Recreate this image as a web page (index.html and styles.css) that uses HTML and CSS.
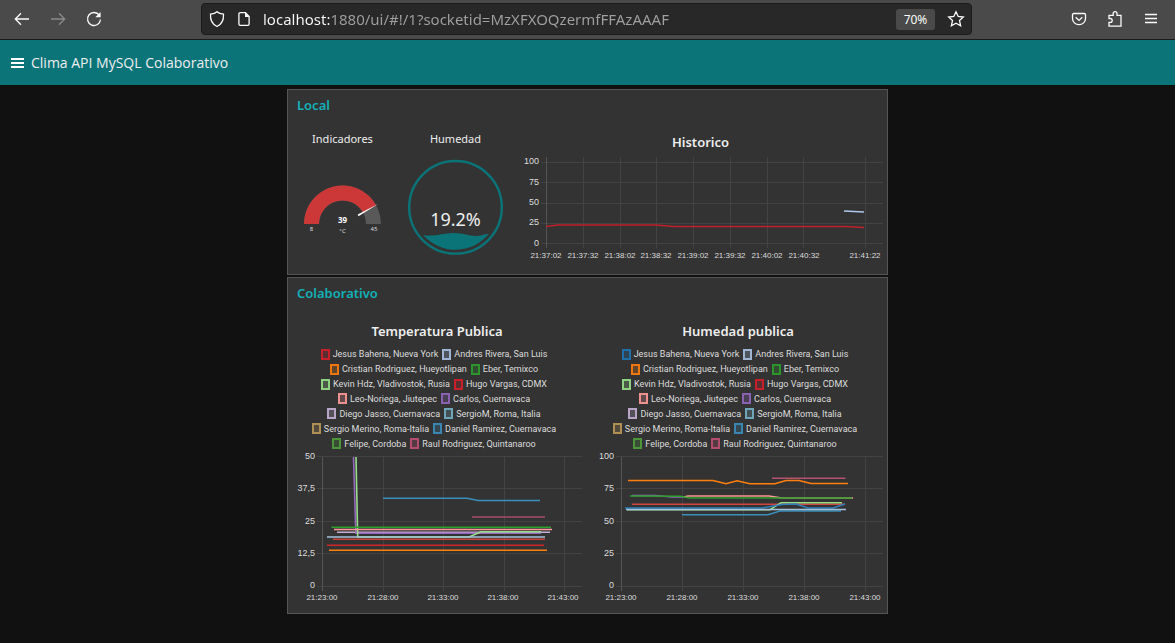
FILE: index.html
```html
<!DOCTYPE html>
<html lang="es">
<head>
<meta charset="utf-8">
<meta name="viewport" content="width=device-width, initial-scale=1">
<title>Clima API MySQL Colaborativo</title>
<link rel="stylesheet" href="styles.css">
</head>
<body>
<div class="browser">
  <div class="browser-group">
    <button class="tool" aria-label="Atrás"><svg width="16" height="16" viewBox="0 0 16 16"><path d="M15 8H1.500M7 2.200L1.300 8L7 13.800"/></svg></button>
    <button class="tool tool-off" aria-label="Adelante" disabled><svg width="16" height="16" viewBox="0 0 16 16"><path d="M1 8h13.500M9 2.200L14.700 8L9 13.800"/></svg></button>
    <button class="tool" aria-label="Recargar"><svg width="16" height="16" viewBox="0 0 16 16"><path d="M13.300 4.200A6.500 6.500 0 1 0 14.500 8.500"/><path class="solid" d="M14.600 1v5.200H9.300z"/></svg></button>
  </div>
  <div class="address">
    <svg width="16" height="18" viewBox="0 0 16 18"><path d="M8 1.700C6.300 3.400 3.600 4 1.500 4.200c-.3 5.500 1.200 9.800 6.500 12.300 5.300-2.500 6.800-6.800 6.500-12.300C12.400 4 9.700 3.400 8 1.700z"/></svg>
    <svg width="14" height="16" viewBox="0 0 14 16"><path d="M8.500 1.700H3.200a1.300 1.300 0 0 0-1.300 1.300v10a1.300 1.300 0 0 0 1.300 1.300h7.600a1.300 1.300 0 0 0 1.300-1.300V5.500z"/><path class="solid" d="M8 1.500v4.500h4.500z"/></svg>
    <input class="url" type="text" aria-label="Dirección" value="localhost:1880/ui/#!/1?socketid=MzXFXOQzermfFFAzAAAF">
    <button class="zoom">70%</button>
    <button class="star" aria-label="Marcador"><svg width="18" height="18" viewBox="0 0 18 18"><path d="M9 1.800l2.200 4.700 5.100.600-3.800 3.400 1.100 5.200L9 13.200l-4.600 2.500 1.100-5.200L1.700 7.100l5.100-.6z"/></svg></button>
  </div>
  <div class="browser-group">
    <button class="tool" aria-label="Pocket"><svg width="16" height="16" viewBox="0 0 16 16"><path d="M2.800 2.500h10.400c.8 0 1.300.5 1.300 1.300V7.500a6.500 6.200 0 0 1-13 0V3.800c0-.8.5-1.300 1.300-1.300z"/><path d="M4.700 6.200L8 9.400l3.300-3.200"/></svg></button>
    <button class="tool" aria-label="Extensiones"><svg width="16" height="18" viewBox="0 0 16 18"><path d="M2 16.200V12.300h1.300a1.900 1.900 0 0 0 0-3.800H2V5.300h4.200V3.500a1.900 1.900 0 0 1 3.800 0v1.800h4v10.900z"/></svg></button>
    <button class="tool" aria-label="Menú"><svg width="14" height="14" viewBox="0 0 14 14"><path d="M1 2.500h12M1 6.500h12M1 10.500h12"/></svg></button>
  </div>
</div>

<header class="appbar">
  <button class="burger" aria-label="Abrir menú"><svg width="14" height="10" viewBox="0 0 14 10"><path d="M0 1h13M0 5h13M0 9h13"/></svg></button>
  <h1>Clima API MySQL Colaborativo</h1>
</header>

<main class="board">
  <section class="panel">
    <h2>Local</h2>
    <div class="local">
      <div class="cell">
        <h3 class="small-title">Indicadores</h3>
        <svg class="plot" viewBox="288 147 109 127" role="img" aria-label="39 °C">
          <path fill="#595959" d="M304 224A38.500 38.500 0 0 1 381 224H366A23.500 23.500 0 0 0 319 224z"/>
          <path fill="#cb3837" d="M304 224A38.500 38.500 0 0 1 376.100 205.200L363 212.500A23.500 23.500 0 0 0 319 224z"/>
          <path fill="#fff" d="M357.700 214.600L378.500 203.800L358.500 216.200z"/>
          <g class="gauge-text"><text class="gauge-value" x="342.500" y="223">39</text><text x="311.500" y="231">8</text><text x="374" y="231">45</text><text x="342.500" y="233">°C</text></g>
        </svg>
      </div>
      <div class="cell">
        <h3 class="small-title">Humedad</h3>
        <svg class="plot" viewBox="397 147 117 127" role="img" aria-label="19.2%">
          <circle cx="455.500" cy="207.300" r="46.300" fill="none" stroke="#0a7479" stroke-width="2.400"/>
          <path fill="#0a7479" d="M423 235C435 237 443 233 453 233C464 233 469 236 475 236C481 236 484 234 489 233.700A43 43 0 0 1 423 235z"/>
          <text class="level" x="455.500" y="226">19.2%</text>
        </svg>
      </div>
      <div class="cell">
        <h3 class="chart-title chart-title-local">Historico</h3>
        <svg class="plot" viewBox="514 150 373 124" role="img" aria-label="Historico">
          <path class="grid" d="M541 162.500H883M541 182.500H883M541 203.500H883M541 223.500H883M541 243.500H883M583.500 157V248M620.500 157V248M656.500 157V248M693.500 157V248M730.500 157V248M767.500 157V248M803.500 157V248M865.500 157V248"/>
          <path class="grid axis" d="M546.500 157V248"/>
          <g class="ylab"><text x="539" y="164">100</text><text x="539" y="185">75</text><text x="539" y="205">50</text><text x="539" y="225">25</text><text x="539" y="246">0</text></g>
          <g class="xlab"><text x="546" y="258">21:37:02</text><text x="583" y="258">21:37:32</text><text x="620" y="258">21:38:02</text><text x="656" y="258">21:38:32</text><text x="693" y="258">21:39:02</text><text x="730" y="258">21:39:32</text><text x="767" y="258">21:40:02</text><text x="804" y="258">21:40:32</text><text x="865" y="258">21:41:22</text></g>
          <g class="lines"><polyline stroke="#c01f2b" points="546,226.500 558,225 656,225 674,226.500 845,226.500 864,227.500"/><polyline stroke="#aec7e8" points="844,211 864,212"/></g>
        </svg>
      </div>
    </div>
  </section>

  <section class="panel">
    <h2>Colaborativo</h2>
    <div class="shared">
      <div class="cell">
        <h3 class="chart-title">Temperatura Publica</h3>
        <ul class="legend">
          <li><span class="key c-red">Jesus Bahena, Nueva York</span><span class="key c-ice">Andres Rivera, San Luis</span></li>
          <li><span class="key c-orange">Cristian Rodriguez, Hueyotlipan</span><span class="key c-green">Eber, Temixco</span></li>
          <li><span class="key c-lime">Kevin Hdz, Vladivostok, Rusia</span><span class="key c-red">Hugo Vargas, CDMX</span></li>
          <li><span class="key c-pink">Leo-Noriega, Jiutepec</span><span class="key c-purple">Carlos, Cuernavaca</span></li>
          <li><span class="key c-lilac">Diego Jasso, Cuernavaca</span><span class="key c-cyan">SergioM, Roma, Italia</span></li>
          <li><span class="key c-sand">Sergio Merino, Roma-Italia</span><span class="key c-steel">Daniel Ramirez, Cuernavaca</span></li>
          <li><span class="key c-leaf">Felipe, Cordoba</span><span class="key c-rose">Raul Rodriguez, Quintanaroo</span></li>
        </ul>
        <svg class="plot" viewBox="288 451 298 162" role="img" aria-label="Temperatura Publica">
          <path class="grid" d="M317 456.500H582M317 488.500H582M317 521.500H582M317 553.500H582M317 586.500H582M383.500 457V591M443.500 457V591M504.500 457V591M564.500 457V591"/>
          <path class="grid axis" d="M322.500 457V591"/>
          <g class="ylab"><text x="315" y="459">50</text><text x="315" y="491">37,5</text><text x="315" y="524">25</text><text x="315" y="556">12,5</text><text x="315" y="588">0</text></g>
          <g class="xlab"><text x="322" y="600">21:23:00</text><text x="383" y="600">21:28:00</text><text x="443" y="600">21:33:00</text><text x="503" y="600">21:38:00</text><text x="563" y="600">21:43:00</text></g>
          <g class="lines">
            <polyline stroke="#3a8fbb" points="383,498.300 467,498.300 478,500.500 540,500.500"/>
            <polyline stroke="#a84c69" points="472,517 545,517"/>
            <polyline stroke="#c8453c" points="333,539.300 545,539.300"/>
            <polyline stroke="#c5b0d5" points="337,532.300 550,532.300"/>
            <polyline stroke="#9467bd" points="353.500,457 355.800,533.300 541,533.300"/>
            <polyline stroke="#98df8a" points="356,457 357.700,537 469,537 481,531.700 541,531.700"/>
            <polyline stroke="#a5c4dc" points="327,537 545,537"/>
            <polyline stroke="#ff9896" points="334,529.500 552,529.500"/>
            <polyline stroke="#2ca02c" points="331.500,527.300 551,527.300"/>
            <polyline stroke="#d62728" points="327,545.200 544,545.200"/>
            <polyline stroke="#ff7f0e" points="329,550.300 547,550.300"/>
          </g>
        </svg>
      </div>
      <div class="cell">
        <h3 class="chart-title">Humedad publica</h3>
        <ul class="legend">
          <li><span class="key c-blue">Jesus Bahena, Nueva York</span><span class="key c-ice">Andres Rivera, San Luis</span></li>
          <li><span class="key c-orange">Cristian Rodriguez, Hueyotlipan</span><span class="key c-green">Eber, Temixco</span></li>
          <li><span class="key c-lime">Kevin Hdz, Vladivostok, Rusia</span><span class="key c-red">Hugo Vargas, CDMX</span></li>
          <li><span class="key c-pink">Leo-Noriega, Jiutepec</span><span class="key c-purple">Carlos, Cuernavaca</span></li>
          <li><span class="key c-lilac">Diego Jasso, Cuernavaca</span><span class="key c-cyan">SergioM, Roma, Italia</span></li>
          <li><span class="key c-sand">Sergio Merino, Roma-Italia</span><span class="key c-steel">Daniel Ramirez, Cuernavaca</span></li>
          <li><span class="key c-leaf">Felipe, Cordoba</span><span class="key c-rose">Raul Rodriguez, Quintanaroo</span></li>
        </ul>
        <svg class="plot" viewBox="589 451 298 162" role="img" aria-label="Humedad publica">
          <path class="grid" d="M616 456.500H883M616 488.500H883M616 521.500H883M616 553.500H883M616 586.500H883M682.500 457V591M743.500 457V591M804.500 457V591M865.500 457V591"/>
          <path class="grid axis" d="M621.500 457V591"/>
          <g class="ylab"><text x="614" y="459">100</text><text x="614" y="491">75</text><text x="614" y="524">50</text><text x="614" y="556">25</text><text x="614" y="588">0</text></g>
          <g class="xlab"><text x="621" y="600">21:23:00</text><text x="682" y="600">21:28:00</text><text x="743" y="600">21:33:00</text><text x="804" y="600">21:38:00</text><text x="865" y="600">21:43:00</text></g>
          <g class="lines">
            <polyline stroke="#b5526f" points="772,478.300 845.500,478.300"/>
            <polyline stroke="#9467bd" points="632,495.500 655,495.500 672,497 684,497"/>
            <polyline stroke="#ff9896" points="684,497 688,496 769,496 782,498 853,498"/>
            <polyline stroke="#d0453f" points="632,504.200 845,504.200"/>
            <polyline stroke="#3a8fbb" points="682,514.700 768,514.700 780,511 841,511"/>
            <polyline stroke="#98df8a" points="627,509.700 770,509.700 781,502.700 842,502.700"/>
            <polyline stroke="#2f7fbb" points="625,508 762,508 782,504.500 796,504 808,508 833,508 845,504"/>
            <polyline stroke="#a5c4dc" points="626,509.500 846,509.500"/>
            <polyline stroke="#2ca02c" points="630,496 680,496.300 690,498 852,498"/>
            <polyline stroke="#ff7f0e" points="628,480.500 713,480.500 726,483.700 737,480.700 750,483.700 775,483.700 786,480.500 799,480.500 811,483.500 848,483.500"/>
          </g>
        </svg>
      </div>
    </div>
  </section>
</main>
</body>
</html>
```

FILE: styles.css
```css
* { box-sizing: border-box; }

body {
  margin: 0;
  min-height: 100vh;
  background: #111;
  color: #eee;
  font-family: "Noto Sans", "Open Sans", sans-serif;
}

h1, h2, h3, ul { margin: 0; padding: 0; }

button {
  display: flex;
  align-items: center;
  justify-content: center;
  padding: 0;
  border: 0;
  background: none;
  color: inherit;
  font: inherit;
}

/* Browser toolbar */
.browser {
  display: flex;
  align-items: center;
  height: 40px;
  padding: 0 6px 1px 4px;
  background: #4a4a4a;
  border-bottom: 1px solid #1c1c1c;
  color: #fbfbfb;
}
.browser svg { fill: none; stroke: currentColor; stroke-width: 1.3; flex: none; }
.browser .solid { fill: currentColor; stroke: none; }
.browser-group { display: flex; }
.tool { width: 36px; height: 32px; }
.tool-off { color: #8a8a8a; }
.address {
  display: flex;
  align-items: center;
  flex: 1;
  min-width: 0;
  height: 32px;
  margin: 0 89px;
  padding: 0 6px 0 7px;
  gap: 12px;
  background: #282828;
  border: 1px solid #1b1b1b;
  border-radius: 4px;
}
.url {
  flex: 1;
  min-width: 0;
  padding: 0;
  border: 0;
  outline: 0;
  font: 15px "Noto Sans", "Open Sans", sans-serif;
  color: transparent;
  background: linear-gradient(90deg, #fbfbfb 67px, #a0a0a0 67px);
  background-clip: text;
  -webkit-background-clip: text;
}
.zoom {
  width: 39px;
  height: 21px;
  background: #4a4a4a;
  border-radius: 3px;
  font-size: 12px;
}
.star { width: 18px; height: 21px; }

/* Dashboard header */
.appbar {
  display: flex;
  align-items: center;
  gap: 6px;
  height: 45px;
  padding: 0 11px;
  background: #0a7479;
  color: #fff;
}
.appbar h1 {
  font: 400 14px/20px "Open Sans", "Noto Sans", sans-serif;
  color: #eee;
}
.burger svg { fill: none; stroke: #fff; stroke-width: 2; }

/* Panels */
.board {
  display: grid;
  gap: 2px;
  max-width: 601px;
  margin: 4px auto;
}
.panel { background: #333; border: 1px solid #555; }
.panel h2 {
  padding-left: 9px;
  font-size: 13px;
  line-height: 30px;
  font-weight: 600;
  color: #14b1b8;
}
.local { display: grid; grid-template-columns: 109fr 117fr 373fr; }
.shared { display: grid; grid-template-columns: 1fr 1fr; gap: 3px; }
.cell { min-width: 0; text-align: center; }
.small-title { padding-top: 11px; font-size: 11px; line-height: 16px; font-weight: 400; }
.chart-title { padding-top: 15px; font-size: 13px; line-height: 16px; font-weight: 600; }
.chart-title-local { padding-top: 14px; }

/* Plots */
.plot { display: block; width: 100%; height: auto; }
.plot text { fill: #ddd; font: 9px "Liberation Sans", sans-serif; }
.plot .xlab text { font-size: 8px; }
.grid { fill: none; stroke: #434343; }
.axis { stroke: #555; }
.ylab { text-anchor: end; }
.xlab { text-anchor: middle; }
.lines { fill: none; stroke-width: 1.6; }
.gauge-text { text-anchor: middle; }
.plot .gauge-text text { font: 6px "Noto Sans", sans-serif; }
.plot .gauge-text .gauge-value { font-size: 8px; font-weight: 700; fill: #fff; }
.plot .level { font: 18px "Noto Sans", sans-serif; text-anchor: middle; fill: #eee; }

/* Legends */
.legend {
  display: grid;
  grid-auto-rows: 1fr;
  height: 104px;
  margin-top: 8px;
  padding-right: 6px;
  list-style: none;
  color: #ddd;
  font: 9px Roboto, "Liberation Sans", sans-serif;
}
.legend li { display: flex; align-items: center; justify-content: center; gap: 4px; white-space: nowrap; }
.key { display: flex; align-items: center; gap: 3px; }
.key::before {
  content: "";
  box-sizing: border-box;
  width: 9px;
  height: 11px;
  border: 2px solid var(--c);
  background: color-mix(in srgb, var(--c) 25%, #333);
}
.c-red { --c: #c8202a; }
.c-blue { --c: #1f6fa8; }
.c-ice { --c: #9fb5d3; }
.c-orange { --c: #ee780f; }
.c-green { --c: #2c962c; }
.c-lime { --c: #8fd082; }
.c-pink { --c: #ee908e; }
.c-purple { --c: #8a61b0; }
.c-lilac { --c: #b8a5c7; }
.c-cyan { --c: #6fa5b8; }
.c-sand { --c: #b08f55; }
.c-steel { --c: #3a86b0; }
.c-leaf { --c: #4c9639; }
.c-rose { --c: #b54d6f; }
```
